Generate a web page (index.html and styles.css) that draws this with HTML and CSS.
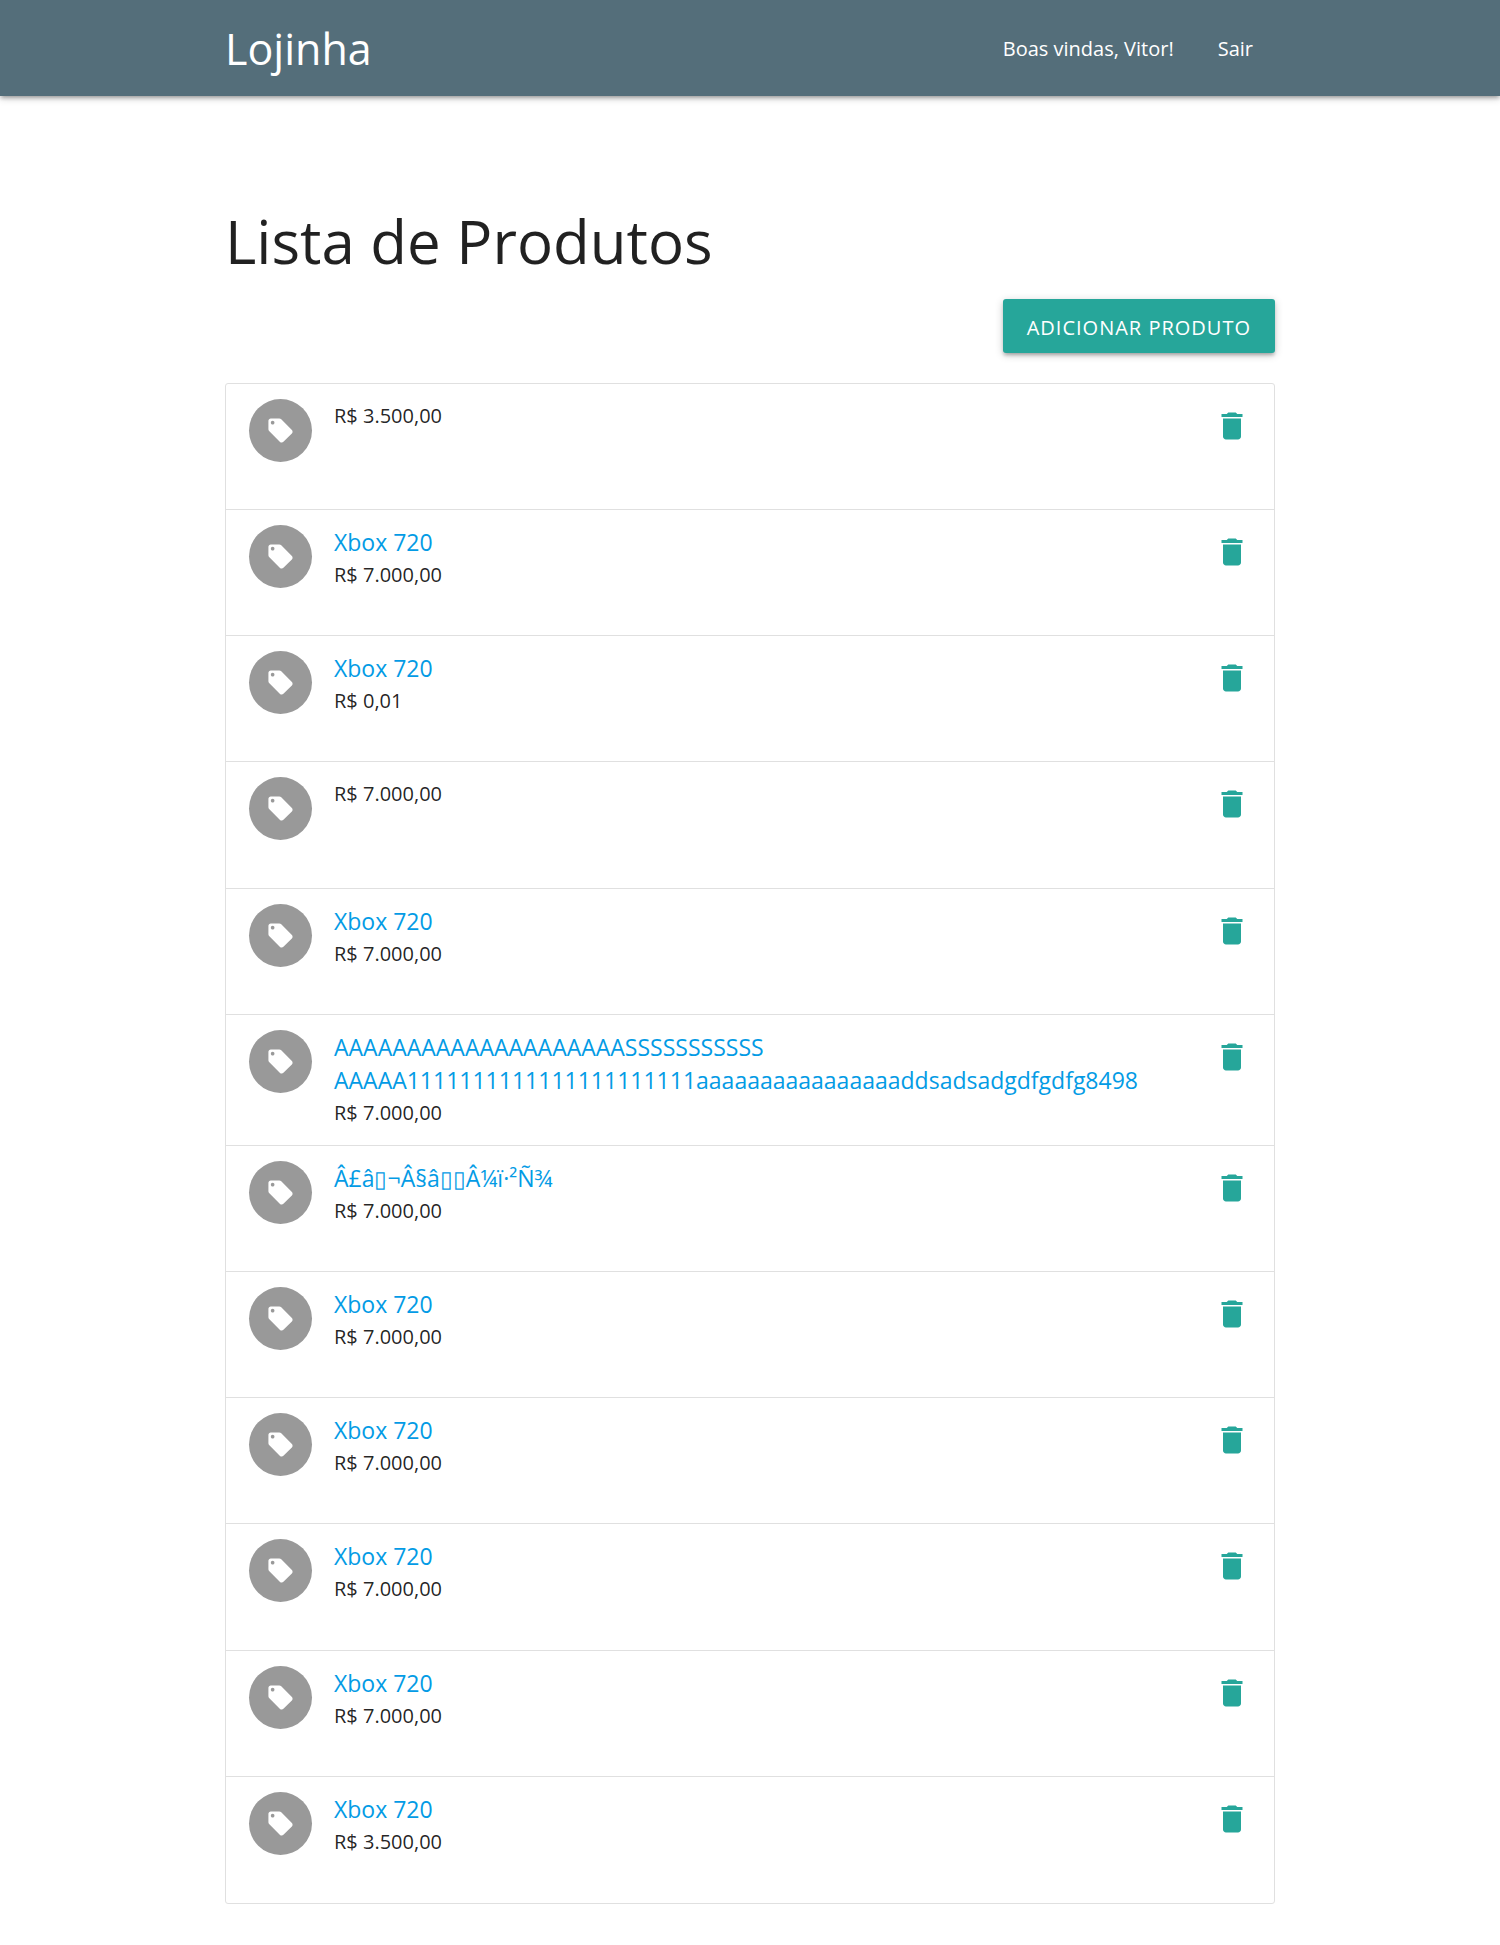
FILE: index.html
```html
<!DOCTYPE html>
<html lang="pt-BR">
<head>
<meta charset="utf-8">
<title>Lojinha</title>
<link rel="stylesheet" href="styles.css">
</head>
<body>
<svg class="sprite" aria-hidden="true">
  <symbol id="tag" viewBox="0 0 24 24"><path d="M21.41 11.58l-9-9C12.05 2.22 11.55 2 11 2H4c-1.1 0-2 .9-2 2v7c0 .55.22 1.05.59 1.42l9 9c.36.36.86.58 1.41.58.55 0 1.05-.22 1.41-.59l7-7c.37-.36.59-.86.59-1.41 0-.55-.23-1.06-.59-1.42zM5.5 7C4.67 7 4 6.33 4 5.5S4.67 4 5.5 4 7 4.67 7 5.5 6.33 7 5.5 7z"/></symbol>
  <symbol id="trash" viewBox="0 0 24 24"><path d="M6 19c0 1.1.9 2 2 2h8c1.1 0 2-.9 2-2V7H6v12zM19 4h-3.5l-1-1h-5l-1 1H5v2h14V4z"/></symbol>
</svg>
<header class="navbar">
  <nav class="container navbar-inner">
    <a class="brand" href="#">Lojinha</a>
    <div class="nav-links">
      <a class="nav-link" href="#">Boas vindas, Vitor!</a>
      <a class="nav-link" href="#">Sair</a>
    </div>
  </nav>
</header>
<main class="container">
  <h1 class="page-title">Lista de Produtos</h1>
  <div class="actions"><button class="button" type="button">ADICIONAR PRODUTO</button></div>
  <ul class="products">
    <li class="product">
      <span class="avatar"><svg class="tag-icon"><use href="#tag"/></svg></span>
      <div class="details"><p class="price">R$ 3.500,00</p></div>
      <button class="delete" type="button" aria-label="Excluir"><svg class="trash-icon"><use href="#trash"/></svg></button>
    </li>
    <li class="product">
      <span class="avatar"><svg class="tag-icon"><use href="#tag"/></svg></span>
      <div class="details"><a class="name" href="#">Xbox 720</a><p class="price">R$ 7.000,00</p></div>
      <button class="delete" type="button" aria-label="Excluir"><svg class="trash-icon"><use href="#trash"/></svg></button>
    </li>
    <li class="product">
      <span class="avatar"><svg class="tag-icon"><use href="#tag"/></svg></span>
      <div class="details"><a class="name" href="#">Xbox 720</a><p class="price">R$ 0,01</p></div>
      <button class="delete" type="button" aria-label="Excluir"><svg class="trash-icon"><use href="#trash"/></svg></button>
    </li>
    <li class="product">
      <span class="avatar"><svg class="tag-icon"><use href="#tag"/></svg></span>
      <div class="details"><p class="price">R$ 7.000,00</p></div>
      <button class="delete" type="button" aria-label="Excluir"><svg class="trash-icon"><use href="#trash"/></svg></button>
    </li>
    <li class="product">
      <span class="avatar"><svg class="tag-icon"><use href="#tag"/></svg></span>
      <div class="details"><a class="name" href="#">Xbox 720</a><p class="price">R$ 7.000,00</p></div>
      <button class="delete" type="button" aria-label="Excluir"><svg class="trash-icon"><use href="#trash"/></svg></button>
    </li>
    <li class="product">
      <span class="avatar"><svg class="tag-icon"><use href="#tag"/></svg></span>
      <div class="details"><a class="name" href="#">AAAAAAAAAAAAAAAAAAAASSSSSSSSSSS AAAAA1111111111111111111111aaaaaaaaaaaaaaaaddsadsadgdfgdfg8498</a><p class="price">R$ 7.000,00</p></div>
      <button class="delete" type="button" aria-label="Excluir"><svg class="trash-icon"><use href="#trash"/></svg></button>
    </li>
    <li class="product">
      <span class="avatar"><svg class="tag-icon"><use href="#tag"/></svg></span>
      <div class="details"><a class="name" href="#">Â£â▯¬Â§â▯▯Â¼ï·²Ñ¾</a><p class="price">R$ 7.000,00</p></div>
      <button class="delete" type="button" aria-label="Excluir"><svg class="trash-icon"><use href="#trash"/></svg></button>
    </li>
    <li class="product">
      <span class="avatar"><svg class="tag-icon"><use href="#tag"/></svg></span>
      <div class="details"><a class="name" href="#">Xbox 720</a><p class="price">R$ 7.000,00</p></div>
      <button class="delete" type="button" aria-label="Excluir"><svg class="trash-icon"><use href="#trash"/></svg></button>
    </li>
    <li class="product">
      <span class="avatar"><svg class="tag-icon"><use href="#tag"/></svg></span>
      <div class="details"><a class="name" href="#">Xbox 720</a><p class="price">R$ 7.000,00</p></div>
      <button class="delete" type="button" aria-label="Excluir"><svg class="trash-icon"><use href="#trash"/></svg></button>
    </li>
    <li class="product">
      <span class="avatar"><svg class="tag-icon"><use href="#tag"/></svg></span>
      <div class="details"><a class="name" href="#">Xbox 720</a><p class="price">R$ 7.000,00</p></div>
      <button class="delete" type="button" aria-label="Excluir"><svg class="trash-icon"><use href="#trash"/></svg></button>
    </li>
    <li class="product">
      <span class="avatar"><svg class="tag-icon"><use href="#tag"/></svg></span>
      <div class="details"><a class="name" href="#">Xbox 720</a><p class="price">R$ 7.000,00</p></div>
      <button class="delete" type="button" aria-label="Excluir"><svg class="trash-icon"><use href="#trash"/></svg></button>
    </li>
    <li class="product">
      <span class="avatar"><svg class="tag-icon"><use href="#tag"/></svg></span>
      <div class="details"><a class="name" href="#">Xbox 720</a><p class="price">R$ 3.500,00</p></div>
      <button class="delete" type="button" aria-label="Excluir"><svg class="trash-icon"><use href="#trash"/></svg></button>
    </li>
  </ul>
</main>
</body>
</html>
```

FILE: styles.css
```css
* { box-sizing: border-box; }

body {
  margin: 0;
  background: #fff;
  color: rgba(0, 0, 0, 0.87);
  font-family: "Open Sans", "Noto Sans", sans-serif;
  font-size: 20px;
  line-height: 33px;
}

a { text-decoration: none; }

.sprite { display: none; }

.container {
  width: 70%;
  margin: 0 auto;
}

/* Top bar */
.navbar {
  background: #546e7a;
  box-shadow: 0 3px 3px 0 rgba(0, 0, 0, 0.14), 0 4px 2px -3px rgba(0, 0, 0, 0.12), 0 2px 8px 0 rgba(0, 0, 0, 0.2);
}

.navbar-inner {
  display: flex;
  justify-content: space-between;
  align-items: center;
  padding-top: 2px;
  line-height: 94px;
}

.brand {
  color: #fff;
  font-size: 43px;
}

.nav-links { display: flex; }

.nav-link {
  padding: 0 22px;
  color: #fff;
}

/* Heading and main action */
.page-title {
  margin: 108px 0 20px;
  font-size: 60px;
  font-weight: 400;
  line-height: 75px;
}

.actions {
  display: flex;
  justify-content: flex-end;
  margin-bottom: 30px;
}

.button {
  height: 54px;
  padding: 2px 24px 0;
  border: 0;
  border-radius: 3px;
  background: #26a69a;
  box-shadow: 0 3px 3px 0 rgba(0, 0, 0, 0.14), 0 4px 2px -3px rgba(0, 0, 0, 0.12), 0 2px 8px 0 rgba(0, 0, 0, 0.2);
  color: #fff;
  font: inherit;
  letter-spacing: 1px;
  cursor: pointer;
}

/* Product list */
.products {
  margin: 0 0 41px;
  padding: 0;
  border: 1px solid #e0e0e0;
  border-radius: 3px;
  list-style: none;
}

.product {
  display: flex;
  align-items: flex-start;
  min-height: 126px;
  padding: 15px 24px 17px 23px;
  border-bottom: 1px solid #e0e0e0;
}

.product:nth-child(6n + 4) { min-height: 127px; }

.product:last-child { border-bottom: 0; }

.avatar {
  display: flex;
  flex: none;
  align-items: center;
  justify-content: center;
  width: 63px;
  height: 63px;
  margin-right: 22px;
  border-radius: 50%;
  background: #999;
}

.tag-icon {
  width: 29px;
  height: 29px;
  fill: #fff;
}

.details {
  flex: 1;
  min-width: 0;
  padding-top: 1px;
}

.name {
  display: block;
  color: #039be5;
  font-size: 23px;
}

.price {
  margin: 0;
  line-height: 31px;
}

.delete {
  flex: none;
  margin: 9px 0 0;
  padding: 0;
  border: 0;
  background: none;
  cursor: pointer;
}

.trash-icon {
  display: block;
  width: 36px;
  height: 36px;
  fill: #26a69a;
}
```
